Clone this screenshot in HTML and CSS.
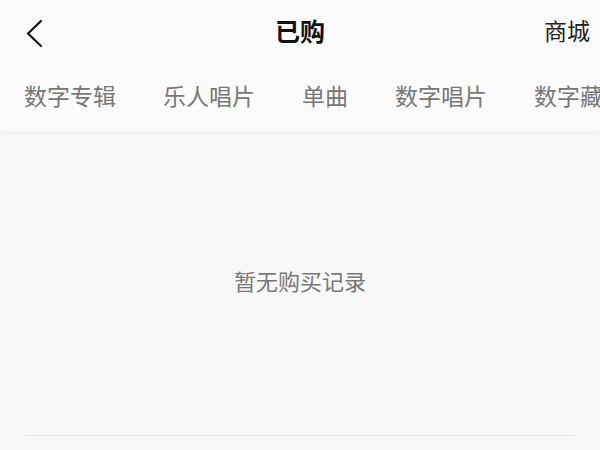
FILE: index.html
```html
<!DOCTYPE html>
<html lang="zh-CN">
<head>
<meta charset="utf-8">
<link rel="stylesheet" href="styles.css">
</head>
<body>
<header class="header">
  <div class="topbar">
    <span class="back">
      <svg width="24" height="30" viewBox="0 0 24 30"><polyline points="17,3 4,15.5 17,28" fill="none" stroke="#111" stroke-width="2.2" stroke-linecap="round" stroke-linejoin="round"/></svg>
    </span>
    <h1 class="title">已购</h1>
    <span class="mall">商城</span>
  </div>
  <nav class="tabs">
    <span class="tab">数字专辑</span>
    <span class="tab">乐人唱片</span>
    <span class="tab">单曲</span>
    <span class="tab">数字唱片</span>
    <span class="tab">数字藏品</span>
  </nav>
</header>
<main class="content">
  <p class="empty">暂无购买记录</p>
  <div class="divider"></div>
</main>
</body>
</html>
```
FILE: styles.css
```css
html, body {
  margin: 0;
  padding: 0;
}
body {
  width: 600px;
  height: 450px;
  overflow: hidden;
  background: #f8f8f8;
  font-family: "Noto Sans CJK SC", "Noto Sans", sans-serif;
}
.header {
  background: #fbfbfb;
  box-shadow: 0 3px 8px rgba(0, 0, 0, 0.035);
  position: relative;
  z-index: 1;
}
.topbar {
  height: 65px;
  display: grid;
  grid-template-columns: 1fr auto 1fr;
  align-items: center;
}
.back {
  display: flex;
  align-items: center;
  padding-left: 24px;
  height: 30px;
}
.title {
  margin: 0;
  padding-bottom: 6px;
  font-size: 25px;
  font-weight: 700;
  color: #111;
  line-height: 30px;
}
.mall {
  justify-self: end;
  padding-right: 10px;
  padding-bottom: 6px;
  font-size: 23px;
  color: #222;
  line-height: 30px;
}
.tabs {
  box-sizing: border-box;
  height: 66px;
  padding-bottom: 6px;
  display: flex;
  align-items: center;
  gap: 47px;
  padding-left: 24px;
  white-space: nowrap;
  overflow: hidden;
}
.tab {
  font-size: 23px;
  color: #777;
  line-height: 30px;
  flex: none;
}
.content {
  display: flex;
  flex-direction: column;
  align-items: center;
}
.empty {
  margin: 134px 0 0;
  font-size: 22px;
  line-height: 30px;
  color: #777;
}
.divider {
  align-self: stretch;
  margin: 140px 25px 0;
  height: 1px;
  background: #e5e5e5;
}
```
